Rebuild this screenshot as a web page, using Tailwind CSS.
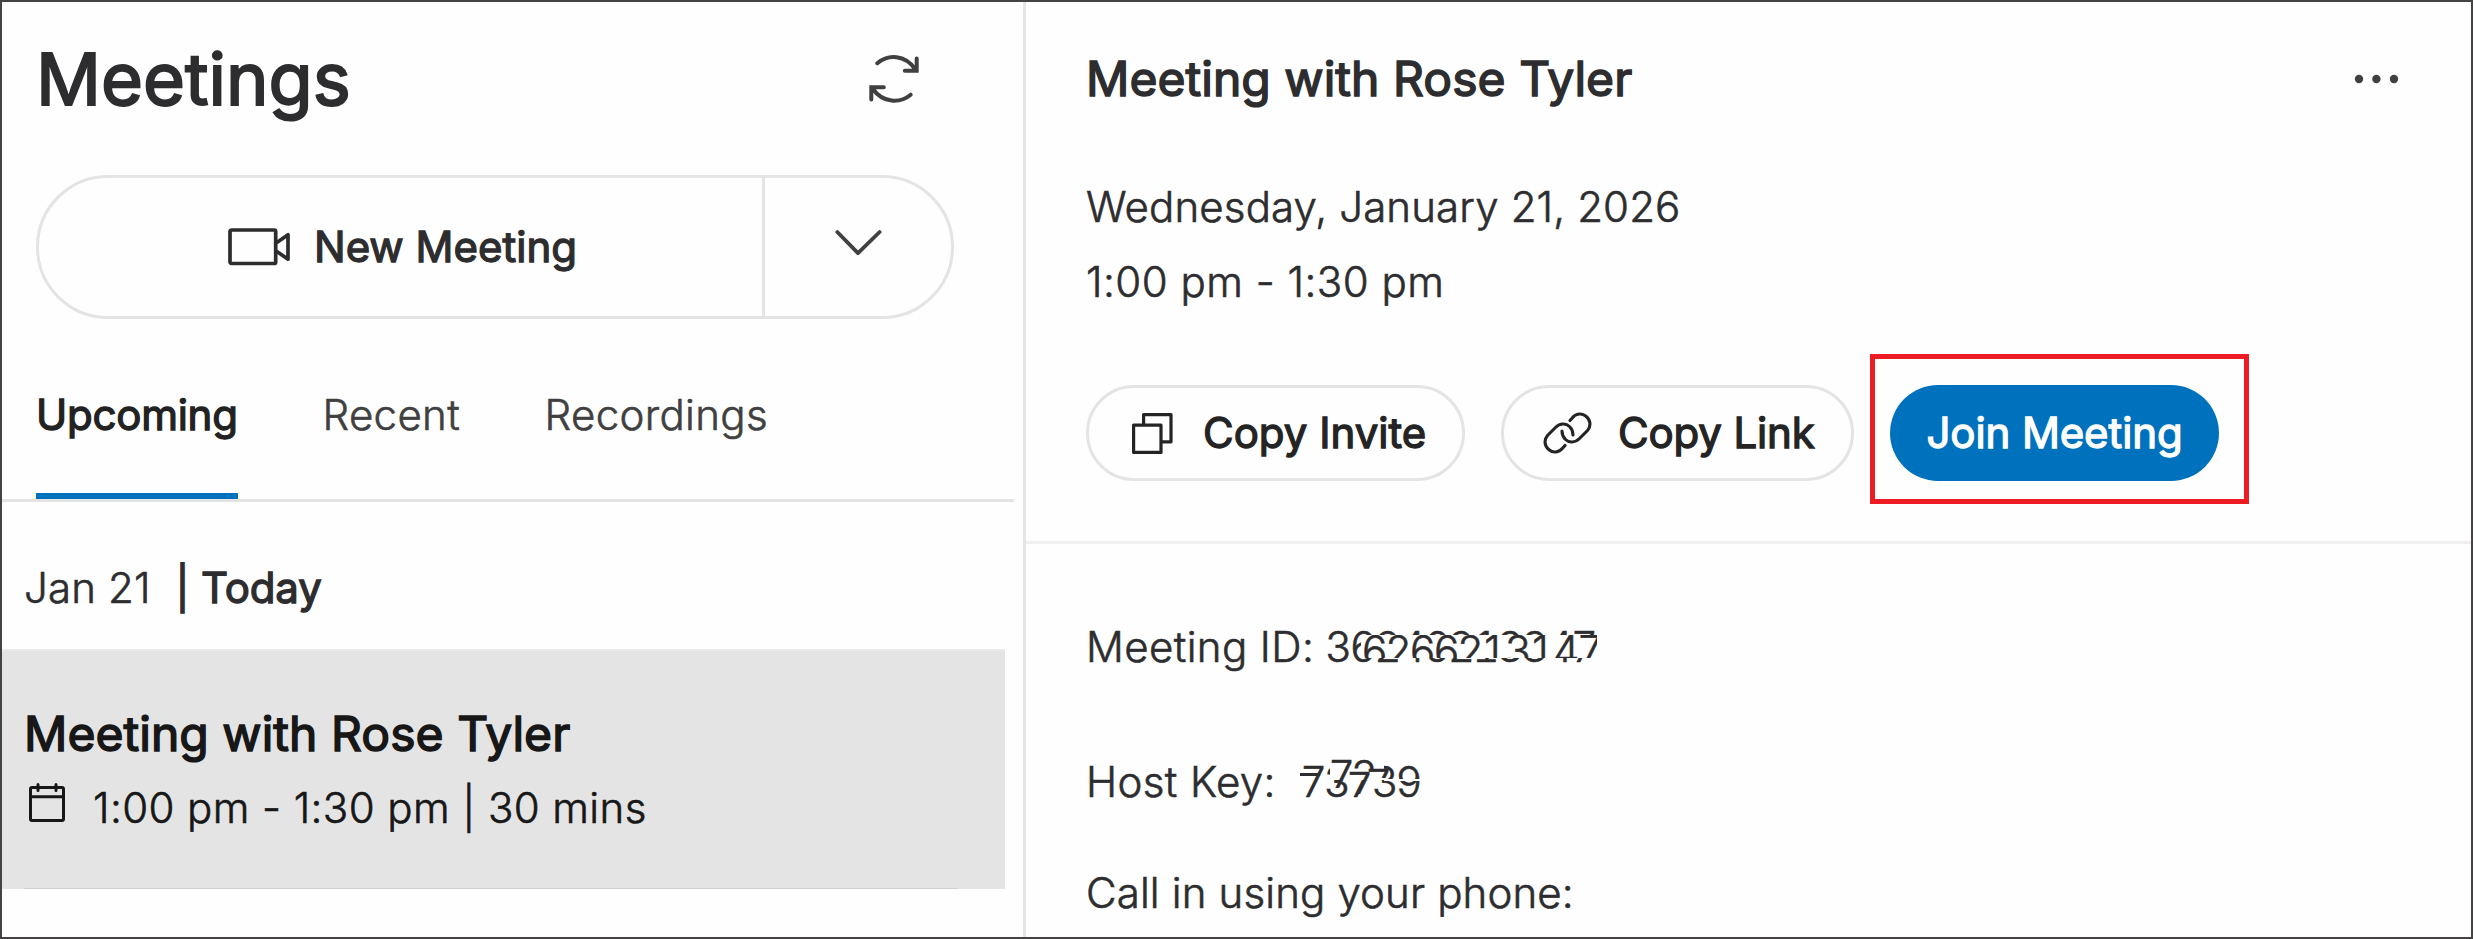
<!DOCTYPE html>
<html lang="en">
<head>
  <meta charset="UTF-8" />
  <title>Meetings</title>
  <script src="https://cdn.jsdelivr.net/npm/@tailwindcss/browser@4"></script>
</head>
<body class="w-[2473px] h-[939px] overflow-hidden font-['Inter',sans-serif] text-[42px] leading-[60px] font-light tracking-[0.14px] [-webkit-text-stroke:0.6px] text-[#2d2d2f] whitespace-nowrap">

  <div class="flex w-full h-full border-2 border-[#444243] bg-[#fefefe] overflow-hidden">

    <!-- Meeting list -->
    <aside class="w-[1024px] shrink-0 border-r-[3px] border-[#e4e4e4]">
      <header class="h-[173px] flex items-start justify-between pt-8 pl-[34px] pr-[104px]">
        <h1 class="text-[72px] leading-[90px] font-normal tracking-normal [-webkit-text-stroke:2px]">Meetings</h1>
        <svg class="mt-5 w-[50px] h-[50px]" viewBox="0 0 50 50" fill="none" stroke="#404040" stroke-width="4" stroke-linecap="round" stroke-linejoin="miter">
          <path d="M8.3 9.3C19 .2 36 .2 46.5 15.5M47.7 4.5v12.2H35.8" />
          <path d="M41.7 40.7C31 49.5 14 49.5 3.5 34.5M14.8 33.3H2.3v12.2" />
        </svg>
      </header>

      <div class="ml-[34px] w-[918px] h-36 flex border-[3px] border-[#e4e4e4] rounded-full">
        <button class="w-[726px] border-r-[3px] border-[#e4e4e4] box-border flex items-center pl-[189px]">
          <svg class="w-[63px] h-[38px]" viewBox="0 0 63 38" fill="none" stroke="#2d2d2f" stroke-width="3.7" stroke-linejoin="round">
            <rect x="2" y="2" width="45.7" height="33.5" rx="1.5" />
            <path d="M48.5 14.7 60 6.8v24.4l-11.5-8" />
          </svg>
          <span class="ml-[23px] font-normal tracking-normal [-webkit-text-stroke:1.3px]">New Meeting</span>
        </button>
        <button class="flex-1 pb-2 flex items-center justify-center">
          <svg class="w-12 h-7" viewBox="0 0 48 28" fill="none" stroke="#404040" stroke-width="3.8" stroke-linecap="round" stroke-linejoin="round">
            <path d="M3.3 3 24 24.2 45.6 3" />
          </svg>
        </button>
      </div>

      <nav class="w-[1012px] h-[183px] flex gap-[84.5px] pl-[34px] border-b-[3px] border-[#e4e4e4] text-[#404040] tracking-[0.34px]">
        <a class="w-[202px] pt-[66px] border-b-[6px] border-[#0072bd] text-[#222] font-normal tracking-[-0.25px] [-webkit-text-stroke:1.3px]">Upcoming</a>
        <a class="pt-[66px]">Recent</a>
        <a class="pt-[66px]">Recordings</a>
      </nav>

      <div class="h-[147px] flex pt-14 pl-[22px]">
        <span>Jan 21</span>
        <span class="ml-[25px] font-normal tracking-[-0.15px] [-webkit-text-stroke:1.3px]">| Today</span>
      </div>

      <div class="w-[1003px] h-[240px] flex flex-col pl-[22px] pt-[53px] border-t-2 border-[#eaeaea] bg-[#e4e4e4] text-[#171717]">
        <div class="text-[48px] font-normal tracking-[0.05px] [-webkit-text-stroke:1.5px]">Meeting with Rose Tyler</div>
        <div class="flex mt-[14px] pl-[5px]">
          <svg class="mt-[5px] w-9 h-[39px]" viewBox="0 0 36 39" fill="none" stroke="#171717" stroke-width="3" stroke-linecap="round">
            <rect x="1.5" y="4.5" width="33" height="33" rx="1.5" />
            <path d="M1.5 13.7h33M9 1.5v6M27 1.5v6" />
          </svg>
          <span class="ml-7 tracking-[0.4px]">1:00 pm - 1:30 pm | 30 mins</span>
        </div>
        <div class="mt-auto w-[933px] h-px bg-[#d0d0d0]"></div>
      </div>
    </aside>

    <!-- Meeting details -->
    <main class="flex-1">
      <section class="h-[542px] pl-[60px] border-b-[3px] border-[#efefef]">
        <div class="flex justify-between pt-[47px]">
          <h2 class="text-[48px] font-normal tracking-[0.05px] [-webkit-text-stroke:1.5px]">Meeting with Rose Tyler</h2>
          <svg class="mt-[25px] mr-[72px] w-[45px] h-[10px]" viewBox="0 0 45 10" fill="#404040">
            <circle cx="5" cy="5" r="4.2" />
            <circle cx="22.4" cy="5" r="4.2" />
            <circle cx="40" cy="5" r="4.2" />
          </svg>
        </div>

        <div class="mt-[60px] leading-[75px]">
          <p>Wednesday, January 21, 2026</p>
          <p class="tracking-[0.48px]">1:00 pm - 1:30 pm</p>
        </div>

        <div class="mt-[66px] flex gap-9 font-normal text-[#242424]">
          <button class="w-[379px] h-24 flex items-center pl-[43px] border-[3px] border-[#e4e4e4] rounded-full">
            <svg class="w-[41px] h-[41px]" viewBox="0 0 41 41" fill="none" stroke="#242424" stroke-width="3.2" stroke-linejoin="round">
              <rect x="1.6" y="12.2" width="27.4" height="27.2" />
              <path d="M11.6 12V1.6h27.4v27.2H29.5" />
            </svg>
            <span class="ml-[30px] tracking-normal [-webkit-text-stroke:1.3px]">Copy Invite</span>
          </button>
          <button class="w-[353px] h-24 flex items-center pl-[39px] border-[3px] border-[#e4e4e4] rounded-full">
            <svg class="w-[49px] h-[42px]" viewBox="0 0 49 42" fill="none" stroke="#242424" stroke-width="3.1" stroke-linecap="round">
              <path d="M27 8.5 29 6.2C33 1.2 39 .8 43 4.2c5 4 5 10.3 1.5 14.3l-8 8C32 31 26 31 22.5 27.5 20 25 19 22 19 19" />
              <path d="M22 33.5 20 35.8C16 40.8 10 41.2 6 37.8 1 33.8 1 27.5 4.5 23.5l8-8C17 11 23 11 26.5 14.5 29 17 30 20 30 23" />
            </svg>
            <span class="ml-[26px] tracking-[-0.15px] [-webkit-text-stroke:1.3px]">Copy Link</span>
          </button>
          <div class="relative">
            <button class="w-[329px] h-24 rounded-full bg-[#0072bd] text-white tracking-[-0.1px] [-webkit-text-stroke:1.3px]">Join Meeting</button>
            <div class="absolute left-[-20px] top-[-31px] w-[379px] h-[150px] border-[5px] border-[#ed1c24]"></div>
          </div>
        </div>
      </section>

      <section class="pl-[60px] pt-[73px]">
        <div class="flex">
          <span class="w-[239px] tracking-[0.4px]">Meeting ID:</span>
          <!-- masked number: a strip of shifted digits lies over the first line -->
          <span class="relative tabular-nums tracking-[-2.6px]">
            <span>36246213347</span>
            <span class="absolute left-[36px] top-[4px] w-[236px] tracking-[-3.2px] bg-[#fefefe] [clip-path:inset(14px_0_23px_0)]">6266213147</span>
          </span>
        </div>
        <div class="flex mt-[75px]">
          <span class="w-[214px] tracking-[0.4px]">Host Key:</span>
          <span class="relative tabular-nums tracking-[-3.3px]">
            <span>73739</span>
            <span class="absolute left-0 top-[21px] w-5 h-[3px] bg-[#2d2d2f]"></span>
            <span class="absolute left-[30px] top-3 w-[54px] h-4 bg-[#fefefe]"></span>
            <span class="absolute left-[28px] top-[-6px] [clip-path:inset(0_0_18px_0)]">7</span>
            <span class="absolute left-[51px] top-[-6px] [clip-path:inset(0_0_37px_0)]">3</span>
            <span class="absolute left-[46px] top-[6px] [clip-path:inset(0_0_24px_0)]">7</span>
            <span class="absolute left-[65px] top-[3px] [clip-path:inset(0_0_37px_0)]">7</span>
            <span class="absolute left-[84px] top-[27px] w-9 h-[2px] bg-[#fefefe]"></span>
          </span>
        </div>
        <p class="mt-[51px]">Call in using your phone:</p>
      </section>
    </main>

  </div>

</body>
</html>
